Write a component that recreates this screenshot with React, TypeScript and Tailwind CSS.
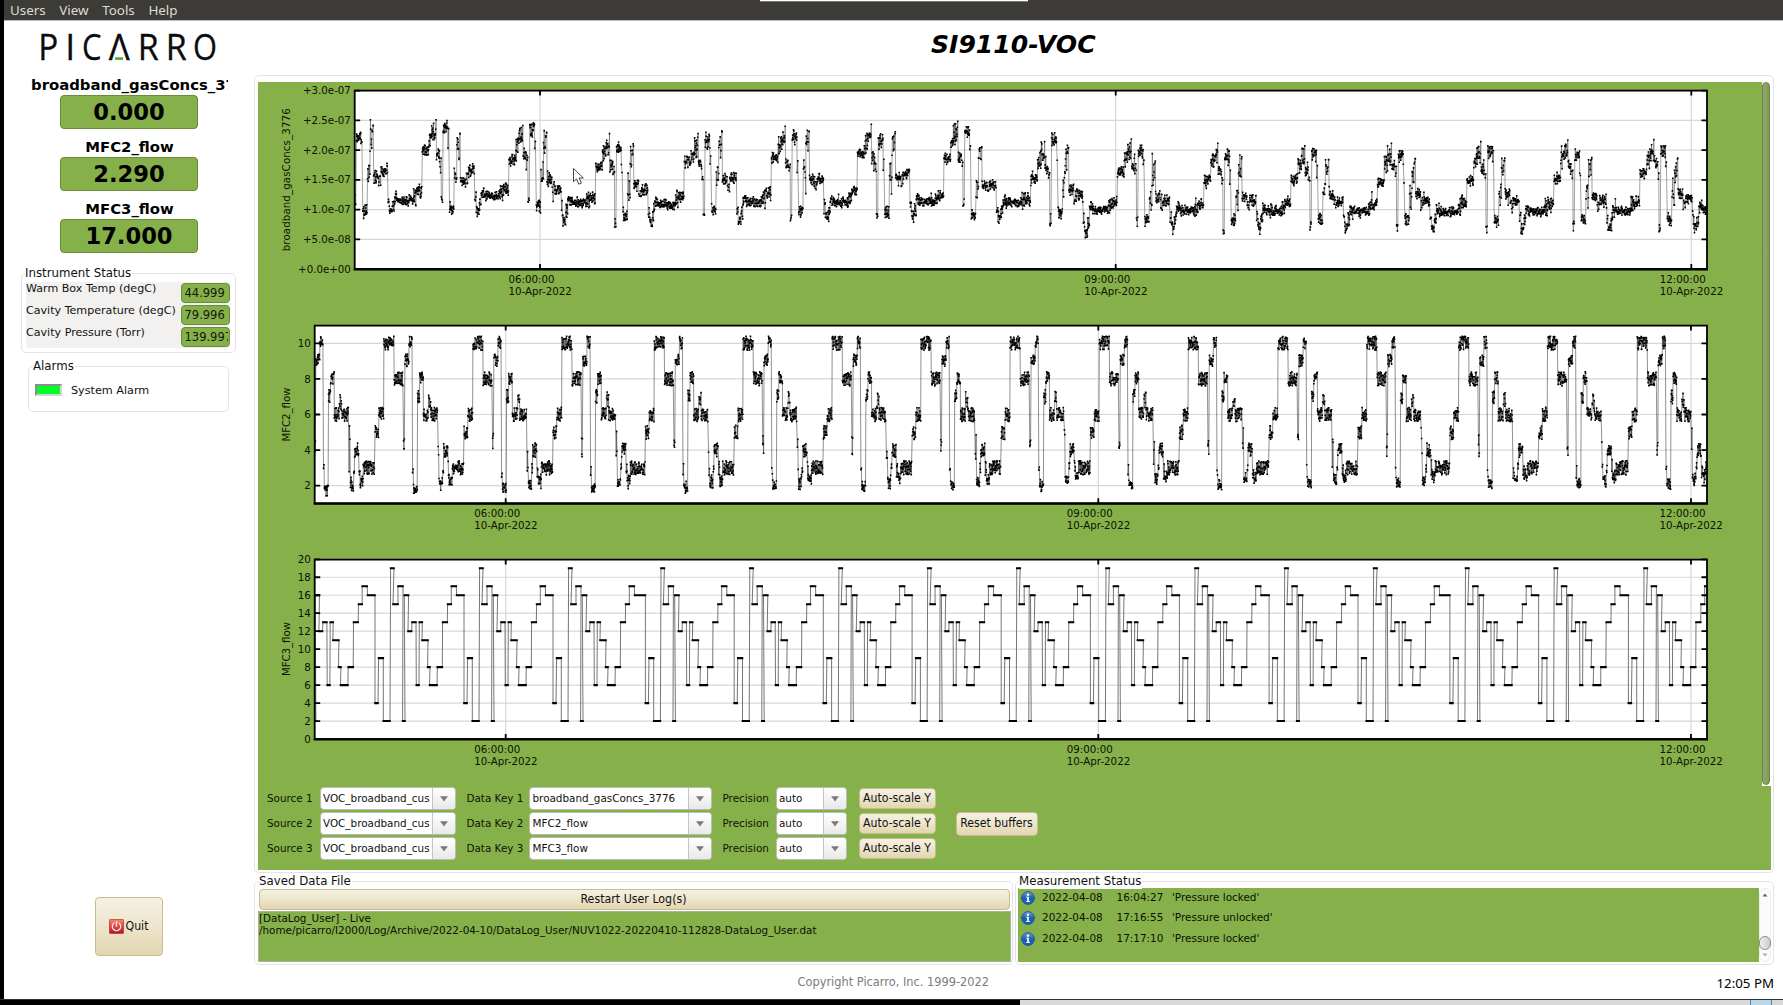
import React from "react";

const FONT = "'DejaVu Sans', sans-serif";

function makeRandom(seed: number) {
  let s = seed;
  return () => {
    s = (s * 1664525 + 1013904223) % 4294967296;
    return s / 4294967296;
  };
}

type Pt = [number, number];
type Seg = [number, number, number, number, number?];

/* ---------- series 1: gas concentration (units of 1e-7) ---------- */

const GAS_CYCLES: number[][] = [
  [335.5, 2.0, 2.3, 1.85, 1.1, 2.22, 0.97, 2.2, 1.55, 1.62, 0.95, 1.15, 1.3],
  [422.3, 2.0, 2.3, 1.92, 1.15, 2.4, 1.03, 2.08, 1.47, 1.64, 0.95, 1.23, 1.35],
  [509, 1.83, 2.2, 1.9, 1.1, 2.35, 1.05, 2.1, 1.52, 1.33, 0.77, 1.12, 1.22],
  [595.7, 1.73, 2.05, 1.75, 0.78, 2.02, 0.92, 1.9, 1.42, 1.33, 0.76, 1.08, 1.22],
  [684.3, 1.8, 2.05, 1.75, 0.82, 2.14, 1.0, 2.1, 1.5, 1.53, 0.8, 1.12, 1.3],
  [771.4, 1.88, 2.18, 1.8, 0.86, 2.2, 0.98, 2.12, 1.5, 1.5, 0.87, 1.12, 1.33],
  [857.5, 1.95, 2.22, 1.85, 0.9, 2.15, 0.95, 2.08, 1.55, 1.6, 0.9, 1.13, 1.22],
  [944, 1.85, 2.25, 1.88, 1.08, 2.32, 0.93, 1.85, 1.4, 1.42, 0.83, 1.12, 1.16],
  [1030.8, 1.53, 1.92, 1.72, 0.82, 2.16, 0.95, 1.85, 1.32, 1.25, 0.6, 1.0, 1.12],
  [1117.5, 1.62, 1.96, 1.76, 0.76, 1.98, 0.82, 1.62, 1.22, 1.14, 0.7, 0.98, 1.08],
  [1204, 1.5, 1.9, 1.65, 0.65, 1.88, 0.82, 1.65, 1.22, 1.15, 0.68, 0.98, 1.1],
  [1291, 1.5, 1.85, 1.68, 0.7, 1.93, 0.82, 1.65, 1.25, 1.14, 0.68, 0.97, 1.1],
  [1377.6, 1.45, 1.9, 1.74, 0.72, 1.96, 0.83, 1.65, 1.25, 1.14, 0.68, 0.97, 1.1],
  [1467, 1.48, 1.92, 1.7, 0.7, 1.97, 0.83, 1.65, 1.25, 1.14, 0.65, 0.97, 1.1],
  [1554, 1.53, 1.95, 1.72, 0.7, 1.9, 0.83, 1.65, 1.25, 1.15, 0.68, 0.98, 1.12],
  [1640, 1.6, 1.96, 1.78, 0.74, 1.97, 0.83, 1.65, 1.27, 1.16, 0.68, 1.0, 1.1],
];

function gasSeries(): Pt[] {
  const rnd = makeRandom(77);
  const out: Pt[] = [];
  GAS_CYCLES.forEach(([x0, a, b, c, l1, d, l2, e, f1, f2, l3, g, h], i) => {
    const next = GAS_CYCLES[i + 1]?.[0] ?? x0 + 86.7;
    const len = next - x0;
    const segs: Seg[] = [
      [0, 6.5, a, 0.11],
      [6.8, 10, b - 0.1, 0.19],
      [10, 13.6, b, 0.2],
      [13.8, 13.9, b + 0.22, 0.02],
      [14.2, 17.3, c, 0.14],
      [17.3, 18.8, c - 0.12, 0.16, 0.5],
      [19, 20.3, l1, 0.14, 0.4],
      [20.8, 25.5, d, 0.14],
      [25.7, 27, d - 0.25, 0.35, 0.7],
      [27.3, 31.5, l2, 0.13],
      [32, 34.5, (l2 + e) / 2, 0.35, 0.4],
      [34.5, 37.3, e, 0.26, 0.35],
      [37.5, 37.8, e + 0.2, 0.04],
      [38.1, 43, f1, 0.12],
      [43.2, 45.5, (f1 + f2) / 2 - 0.12, 0.2, 0.5],
      [45.5, 52.2, f2, 0.12],
      [52.6, 54, l3 + 0.2, 0.17, 0.4],
      [54, 56.8, l3 + 0.02, 0.1],
      [56.8, 58.8, (l3 + g) / 2, 0.16],
      [58.8, 62, g + 0.04, 0.13],
      [62, len - 9, g, 0.1],
      [len - 9, len - 6, (g + h) / 2, 0.2],
      [len - 6, len - 0.3, h, 0.13],
    ];
    for (const [s, t, v, n, step] of segs) {
      for (let x = s; x <= t; x += step ?? 0.26) {
        const k = rnd() + rnd() - 1;
        const spike = rnd() > 0.94 ? 1.6 : 1;
        out.push([x0 + x, v + k * n * spike]);
      }
    }
  });
  return out;
}

/* ---------- series 2: MFC2 flow ---------- */

const CYCLE_STARTS = [
  301.2, 390.3, 479.3, 568.3, 660.7, 749.5, 838.6, 927.4, 1016.5, 1105.7, 1194.7, 1284.4, 1373.3,
  1465.2, 1553.9, 1643.7,
];

const FLOW2: Seg[] = [
  [0, 30, 9.6, 10.4],
  [31, 57, 7.6, 8.4],
  [59, 62, 3.6, 5, 0.8],
  [63, 75, 8.7, 9.4],
  [75.5, 85, 9.7, 10.4],
  [86, 88, 2.4, 3.3, 1.5],
  [88.7, 100, 1.4, 2.2],
  [101, 107, 6.6, 7.4],
  [107.5, 118, 7.7, 8.4],
  [118.4, 133, 5.6, 6.4],
  [134, 140, 6.3, 7.3, 1],
  [140.5, 161, 5.6, 6.4],
  [163, 166, 2.4, 5.4, 1.1],
  [166.7, 176, 1.6, 2.5],
  [177, 179, 2.7, 3.3, 0.8],
  [179.5, 192, 3.6, 4.4],
  [193, 196, 2.3, 3.5, 0.9],
  [196, 205, 1.7, 2.7],
  [205.5, 239, 2.6, 3.4],
  [240.5, 251, 4.6, 5.4],
  [252, 266.3, 5.6, 6.4],
];

function flow2Series(): Pt[] {
  const rnd = makeRandom(4242);
  const out: Pt[] = [];
  CYCLE_STARTS.forEach((c, i) => {
    const x0 = c - 6.4;
    const shift = ((CYCLE_STARTS[i + 1] ?? c + 89) - c - 89) * 3;
    const lift = Math.min(i, 10) * 0.03;
    FLOW2.forEach(([s, t, lo, hi, step], j) => {
      const dx = j > 18 ? shift : 0;
      const ext = j >= 18 ? shift : 0;
      for (let x = s + dx; x <= t + ext; x += step ?? 0.74) {
        const up = lo < 2.3 ? lift : 0;
        let v = lo + up + (hi - lo) * rnd();
        if (hi < 2.8) v = lo + up + (hi - lo) * 0.5 * (rnd() + rnd());
        out.push([x0 + x / 3, v]);
      }
    });
  });
  return out;
}

/* ---------- series 3: MFC3 flow ---------- */

const FLOW3: [number, number, number][] = [
  [1, 11, 19],
  [8, 23, 15],
  [23, 38, 17],
  [37, 44, 2],
  [42, 55, 16],
  [53, 64, 12],
  [65, 77, 13],
  [78, 86, 6],
  [87, 96, 13],
  [95, 113, 11],
  [112, 119, 8],
  [118, 140, 6],
  [141, 156, 8],
  [157, 171, 13],
  [172, 183, 15],
  [183, 198, 17],
  [199, 221, 16],
  [221, 230, 4],
  [232, 246, 9],
  [246, 266, 2],
];

function flow3Flats(): [number, number, number][] {
  const out: [number, number, number][] = [];
  CYCLE_STARTS.forEach((c, i) => {
    const shift = (CYCLE_STARTS[i + 1] ?? c + 89) - c - 89;
    FLOW3.forEach(([a, b, v], j) => {
      const dx = j > 16 ? shift : 0;
      const ext = j >= 16 ? shift : 0;
      out.push([c + a / 3 + dx, c + b / 3 + ext, v]);
    });
  });
  return out;
}

const linePath = (pts: Pt[]) =>
  pts.map(([x, y], i) => `${i ? "L" : "M"}${x.toFixed(1)} ${y.toFixed(1)}`).join("");
const dotPath = (pts: Pt[]) =>
  pts.map(([x, y]) => `M${(x - 0.8).toFixed(1)} ${y.toFixed(1)}h1.6`).join("");

interface Tick {
  pos: number;
  label: string;
}

interface ChartProps {
  top: number;
  height: number;
  frame: [number, number, number, number];
  title: string;
  titleLen: number;
  titleY: number;
  yTicks: Tick[];
  xTicks: [number, string][];
  children: React.ReactNode;
  id: string;
}

function Chart(p: ChartProps) {
  const [l, t, r, b] = p.frame;
  return (
    <svg
      width={1500}
      height={p.height}
      viewBox={`258 ${p.top} 1500 ${p.height}`}
      className="block shrink-0"
      fontFamily={FONT}
      fontSize={10.25}
      fill="#0c1204"
    >
      <defs>
        <clipPath id={p.id}>
          <rect x={l} y={t} width={r - l} height={b - t} />
        </clipPath>
      </defs>
      <rect x={l} y={t} width={r - l} height={b - t} fill="#fff" />
      <g stroke="#d7d7d7" strokeWidth={1.2}>
        {p.yTicks.map((k) => (
          <line key={k.pos} x1={l} x2={r} y1={k.pos} y2={k.pos} />
        ))}
        {p.xTicks.map(([x]) => (
          <line key={x} x1={x} x2={x} y1={t} y2={b} />
        ))}
      </g>
      <g clipPath={`url(#${p.id})`}>{p.children}</g>
      <g stroke="#000" strokeWidth={1.8}>
        {p.yTicks.map((k) => (
          <path key={k.pos} d={`M${l} ${k.pos}h5.5M${r} ${k.pos}h-5.5`} />
        ))}
        {p.xTicks.map(([x]) => (
          <path key={x} d={`M${x} ${t}v5M${x} ${b}v-5`} />
        ))}
      </g>
      <rect x={l} y={t} width={r - l} height={b - t} fill="none" stroke="#000" strokeWidth={1.8} />
      <line x1={l - 1} x2={r + 1} y1={b + 0.3} y2={b + 0.3} stroke="#000" strokeWidth={2.3} />
      {p.yTicks.map((k) => (
        <text key={k.pos} x={l - 3.8} y={k.pos + 3.6} textAnchor="end">
          {k.label}
        </text>
      ))}
      {p.xTicks.map(([x, label]) => (
        <g key={x}>
          <text x={x - 31.5} y={b + 14}>
            {label}
          </text>
          <text x={x - 31.5} y={b + 26}>
            10-Apr-2022
          </text>
        </g>
      ))}
      <text
        transform={`translate(289.5 ${p.titleY}) rotate(-90)`}
        textAnchor="middle"
        textLength={p.titleLen}
      >
        {p.title}
      </text>
    </svg>
  );
}

const gasY = (v: number) => 269 - v * 59.45;
const f2Y = (v: number) => 521.3 - v * 17.8;
const f3Y = (v: number) => 739 - v * 8.985;

const gasPts: Pt[] = gasSeries().map(([x, v]) => [x, gasY(Math.min(v, 2.51))]);
const f2Pts: Pt[] = flow2Series().map(([x, v]) => [x, f2Y(v)]);
const f3Flats = flow3Flats();
const f3Line = f3Flats
  .map(([a, b, v], i) => `${i ? "L" : "M"}${a.toFixed(1)} ${f3Y(v).toFixed(1)}H${b.toFixed(1)}`)
  .join("");
const f3Bars = f3Flats
  .map(([a, b, v]) => `M${(a - 0.8).toFixed(1)} ${f3Y(v).toFixed(1)}H${(b + 0.8).toFixed(1)}`)
  .join("");

const gasTicks: Tick[] = [
  "+0.0e+00",
  "+5.0e-08",
  "+1.0e-07",
  "+1.5e-07",
  "+2.0e-07",
  "+2.5e-07",
  "+3.0e-07",
].map((label, i) => ({ pos: gasY(i * 0.5), label }));
const f2Ticks: Tick[] = [2, 4, 6, 8, 10].map((n) => ({ pos: f2Y(n), label: String(n) }));
const f3Ticks: Tick[] = [0, 2, 4, 6, 8, 10, 12, 14, 16, 18, 20].map((n) => ({
  pos: f3Y(n),
  label: String(n),
}));

/* ---------- widgets ---------- */

function Combo({ text, className, arrow }: { text: string; className: string; arrow: string }) {
  return (
    <div
      className={`flex h-[23px] overflow-hidden rounded-[4px] border border-[#b9bfae] bg-white ${className}`}
    >
      <div className="mr-[2px] ml-[2.5px] flex-1 overflow-hidden text-[10.4px] leading-[20px] whitespace-nowrap text-[#111]">
        {text}
      </div>
      <div
        className={`flex items-center justify-center border-l border-[#c4c4c4] bg-linear-to-b from-white to-[#e9e9e9] ${arrow}`}
      >
        <svg width="8" height="6" viewBox="0 0 8 6">
          <path d="M0.5 0.8h7L4 5.6z" fill="#7c7c7c" />
          <path d="M0.5 0.8h7" stroke="#666" strokeWidth="0.8" />
        </svg>
      </div>
    </div>
  );
}

function BeigeButton({ children, className }: { children: React.ReactNode; className: string }) {
  return (
    <button
      className={`flex items-center justify-center rounded-[4px] border border-[#c9bb8c] bg-linear-to-b from-[#f5f0e1] via-[#ede5cc] to-[#e2d6b0] whitespace-nowrap text-[#111] ${className}`}
    >
      {children}
    </button>
  );
}

function SourceRow({ n, dataKey }: { n: number; dataKey: string }) {
  return (
    <div className="flex h-[25px] items-center text-[10.4px] text-[#0d1505]">
      <span className="w-[52.5px] whitespace-nowrap">Source {n}</span>
      <Combo text="VOC_broadband_cus" className="w-[136.5px]" arrow="w-[23px]" />
      <span className="ml-[10.5px] w-[62.5px] whitespace-nowrap">Data Key {n}</span>
      <Combo text={dataKey} className="w-[183px]" arrow="w-[23px]" />
      <span className="ml-[10.5px] w-[53px]">Precision</span>
      <Combo text="auto" className="w-[71.5px]" arrow="w-[23px]" />
      <BeigeButton className="ml-3 h-[21px] w-[77px] pr-px pb-px font-['DejaVu_Sans_Condensed','DejaVu_Sans',sans-serif] text-[12.2px] [font-stretch:condensed]">
        Auto-scale Y
      </BeigeButton>
    </div>
  );
}

function Readout({ label, value }: { label: string; value: string }) {
  return (
    <div className="flex h-[62px] flex-col items-center">
      <div className="-mx-px flex h-[19px] w-[198px] overflow-hidden pl-px">
        <span className="mx-auto text-[14.85px] leading-[18px] font-bold whitespace-nowrap">{label}</span>
      </div>
      <div className="flex h-[34px] w-[138px] items-center justify-center rounded-[4px] border border-[#6a8c3a] bg-[#86b04a] pb-px text-[22.6px] leading-[30px] font-bold">
        {value}
      </div>
    </div>
  );
}

function GroupBox({
  title,
  className,
  legend,
  children,
}: {
  title?: string;
  className: string;
  legend?: string;
  children: React.ReactNode;
}) {
  return (
    <section className={`relative rounded-[5px] border border-[#e4e4e4] ${className}`}>
      {title && (
        <span
          className={`absolute -top-[9px] bg-white pr-px text-[11.8px] leading-[16px] whitespace-nowrap text-[#111] ${legend}`}
        >
          {title}
        </span>
      )}
      {children}
    </section>
  );
}

function StatusValue({ label, value }: { label: string; value: string }) {
  return (
    <div className="flex h-[22.2px] items-start justify-between">
      <span className="text-[11.1px] leading-[13px] whitespace-nowrap text-[#111]">{label}</span>
      <span className="mt-[0.5px] mr-[0.5px] h-[20.5px] w-[49px] rounded-[4px] border border-[#6a8c3a] bg-[#86b04a] pr-px pl-[3px] text-[11.5px] leading-[18px] text-[#10180a]">
        <span className="block overflow-hidden">{value}</span>
      </span>
    </div>
  );
}

function InfoIcon() {
  return (
    <svg width="14" height="14" viewBox="0 0 14 14">
      <defs>
        <linearGradient id="info" x1="0" y1="0" x2="0" y2="1">
          <stop offset="0" stopColor="#6d9fd8" />
          <stop offset="0.5" stopColor="#1f5fae" />
          <stop offset="1" stopColor="#1463c4" />
        </linearGradient>
      </defs>
      <circle cx="7" cy="7" r="6.4" fill="url(#info)" stroke="#174a8a" strokeWidth="0.8" />
      <circle cx="7" cy="3.7" r="1.2" fill="#fff" />
      <path d="M5.2 5.7h2.7v4.2h1v1.1H5.2V9.9h1V6.8h-1z" fill="#fff" />
    </svg>
  );
}

const LOGO: [string, number, number][] = [
  ["P", 38.2, 20],
  ["I", 65.2, 10],
  ["C", 82, 19.5],
  ["Λ", 108.8, 21],
  ["R", 137.8, 21],
  ["R", 165.8, 21],
  ["O", 193, 24],
];

function Logo() {
  return (
    <svg width="190" height="52" viewBox="36 20 190 52" className="-my-[9px] block" role="img" aria-label="PICARRO">
      <g fontFamily="'Open Sans', sans-serif" fontSize="36" fill="#0c0c0c" stroke="#0c0c0c" strokeWidth="0.3">
        {LOGO.map(([ch, x, w], i) => (
          <text key={i} x={x} y={60.3} textLength={w} lengthAdjust="spacingAndGlyphs">
            {ch}
          </text>
        ))}
      </g>
      <rect x="115" y="57.2" width="8" height="2.8" fill="#5fa843" />
    </svg>
  );
}

const EVENTS: [string, string][] = [
  ["16:04:27", "'Pressure locked'"],
  ["17:16:55", "'Pressure unlocked'"],
  ["17:17:10", "'Pressure locked'"],
];

export default function App() {
  return (
    <div className="flex h-[1005px] w-[1783px] flex-col overflow-hidden bg-black font-['DejaVu_Sans',sans-serif] text-black">
      <header className="relative flex h-[20px] shrink-0 items-center gap-[13.6px] bg-[#3c3b37] pt-px pl-[10px] font-['Noto_Sans',sans-serif] text-[13.4px] leading-none text-[#dfdbd2]">
        <span>Users</span>
        <span>View</span>
        <span>Tools</span>
        <span>Help</span>
        <div className="absolute top-0 left-[760px] h-[2px] w-[268px] border-b border-[#777] bg-white" />
        <div className="absolute top-0 left-0 h-full w-1 bg-black" />
      </header>

      <div className="ml-1 flex h-[979px] shrink-0 border-t border-[#bdbdbd] bg-white">
        <aside className="flex w-[250px] shrink-0 flex-col">
          <div className="mt-[8px] ml-8">
            <Logo />
          </div>
          <div className="mt-[13px] ml-[27px] flex w-[196px] flex-col">
            <Readout label="broadband_gasConcs_3776" value="0.000" />
            <Readout label="MFC2_flow" value="2.290" />
            <Readout label="MFC3_flow" value="17.000" />
          </div>

          <GroupBox title="Instrument Status" legend="left-[3px]" className="mt-[11px] ml-[17px] h-[80px] w-[215px]">
            <div className="mt-2 ml-1 h-[66px] w-[204px] bg-[#f2f1f0]">
              <StatusValue label="Warm Box Temp (degC)" value="44.999" />
              <StatusValue label="Cavity Temperature (degC)" value="79.996" />
              <StatusValue label="Cavity Pressure (Torr)" value="139.997" />
            </div>
          </GroupBox>

          <GroupBox title="Alarms" legend="left-[4px]" className="mt-[13px] ml-6 h-[46px] w-[201px]">
            <div className="mt-[16.5px] ml-[6px] flex items-center">
              <span className="h-[12px] w-[27px] border-2 border-[#8d8d8d] border-r-[#d5d5d5] border-b-[#d5d5d5] bg-[#00ff2a]" />
              <span className="ml-[9px] text-[11.2px] leading-[13px] text-[#111]">System Alarm</span>
            </div>
          </GroupBox>

          <BeigeButton className="mt-auto mb-[43px] ml-[91px] h-[59px] w-[68px] gap-[2px] pr-px pb-px font-['DejaVu_Sans_Condensed','DejaVu_Sans',sans-serif] text-[12.2px] [font-stretch:condensed]">
            <svg width="15" height="15" viewBox="0 0 15 15">
              <defs>
                <linearGradient id="quit" x1="0" y1="0" x2="0" y2="1">
                  <stop offset="0" stopColor="#f08a6c" />
                  <stop offset="0.6" stopColor="#d93a40" />
                  <stop offset="1" stopColor="#a8143a" />
                </linearGradient>
              </defs>
              <rect x="0.4" y="0.4" width="14.2" height="14.2" rx="1" fill="url(#quit)" stroke="#b5382f" strokeWidth="0.8" />
              <path d="M5 4.1a4.2 4.2 0 1 0 5 0" fill="none" stroke="#fbe4e0" strokeWidth="1.3" strokeLinecap="round" />
              <path d="M7.5 2.6v4.6" stroke="#fbe4e0" strokeWidth="1.4" strokeLinecap="round" />
            </svg>
            Quit
          </BeigeButton>
        </aside>

        <main className="flex w-[1520px] shrink-0 flex-col">
          <h1 className="mt-[7px] h-[47px] pl-[677px] text-[25.1px] leading-[34px] font-bold whitespace-nowrap italic">
            SI9110-VOC
          </h1>

          <GroupBox className="h-[798px] shrink-0 p-[3px] pt-[6px]">
            <div className="relative flex h-[788px] w-[1513px] flex-col bg-[#86b04a]">
              <Chart
                id="c1"
                top={82}
                height={228}
                frame={[354.7, 90.6, 1707, 269]}
                title="broadband_gasConcs_3776"
                titleLen={143}
                titleY={179.8}
                yTicks={gasTicks}
                xTicks={[
                  [540, "06:00:00"],
                  [1115.7, "09:00:00"],
                  [1691.3, "12:00:00"],
                ]}
              >
                <path d={linePath(gasPts)} fill="none" stroke="#444" strokeWidth={0.5} />
                <path d={dotPath(gasPts)} stroke="#000" strokeWidth={1.6} />
              </Chart>
              <Chart
                id="c2"
                top={310}
                height={230}
                frame={[314.7, 325.6, 1707, 503.3]}
                title="MFC2_flow"
                titleLen={54}
                titleY={414.5}
                yTicks={f2Ticks}
                xTicks={[
                  [505.7, "06:00:00"],
                  [1098.3, "09:00:00"],
                  [1691, "12:00:00"],
                ]}
              >
                <path d={linePath(f2Pts)} fill="none" stroke="#333" strokeWidth={0.55} />
                <path d={dotPath(f2Pts)} stroke="#000" strokeWidth={1.6} />
              </Chart>
              <Chart
                id="c3"
                top={540}
                height={236}
                frame={[314.7, 559.6, 1707, 739]}
                title="MFC3_flow"
                titleLen={54}
                titleY={649}
                yTicks={f3Ticks}
                xTicks={[
                  [505.7, "06:00:00"],
                  [1098.3, "09:00:00"],
                  [1691, "12:00:00"],
                ]}
              >
                <path d={f3Line} fill="none" stroke="#666" strokeWidth={0.9} />
                <path d={f3Bars} stroke="#000" strokeWidth={2.1} />
              </Chart>

              <div className="mt-[10px] ml-[9px] flex items-center">
                <div className="flex flex-col">
                  <SourceRow n={1} dataKey="broadband_gasConcs_3776" />
                  <SourceRow n={2} dataKey="MFC2_flow" />
                  <SourceRow n={3} dataKey="MFC3_flow" />
                </div>
                <BeigeButton className="ml-[20px] h-[24px] w-[82px] pr-px pb-px font-['DejaVu_Sans_Condensed','DejaVu_Sans',sans-serif] text-[12.2px] [font-stretch:condensed]">
                  Reset buffers
                </BeigeButton>
              </div>

              <div className="absolute top-0 right-0 h-[704px] w-[9px] bg-white">
                <div className="h-[703px] w-2 rounded-[4px] border border-[#6f8250] bg-linear-to-r from-[#9a9a86] via-[#86a858] to-[#7b9c49]" />
              </div>
              <svg className="absolute top-[85px] left-[314px]" width="14" height="20" viewBox="0 0 14 20">
                <path
                  d="M1.5 1.5v13.2l3-2.8 2.3 5.3 2.6-1.1-2.3-5.1h4.3z"
                  fill="#fff"
                  stroke="#333"
                  strokeWidth="0.9"
                />
              </svg>
            </div>
          </GroupBox>

          <div className="mt-[8px] flex gap-[2px]">
            <GroupBox title="Saved Data File" legend="left-[4px]" className="h-[84px] w-[759px] px-[3px] pt-[7px]">
              <BeigeButton className="ml-px h-[21px] w-[751px] pr-0.5 pb-px font-['DejaVu_Sans_Condensed','DejaVu_Sans',sans-serif] text-[12.3px] [font-stretch:condensed]">
                Restart User Log(s)
              </BeigeButton>
              <div className="mt-px h-[51px] w-[753px] border border-[#a9b59a] bg-[#86b04a] text-[10.4px] leading-[12px] whitespace-nowrap text-[#0b1104]">
                <div>[DataLog_User] - Live</div>
                <div>/home/picarro/I2000/Log/Archive/2022-04-10/DataLog_User/NUV1022-20220410-112828-DataLog_User.dat</div>
              </div>
            </GroupBox>
            <GroupBox title="Measurement Status" legend="left-[3px]" className="h-[84px] w-[759px] px-[2px] pt-[6px]">
              <div className="flex h-[74px]">
                <div className="flex w-[741px] flex-col bg-[#86b04a] text-[10.45px] text-[#0b1104]">
                  {EVENTS.map(([time, msg]) => (
                    <div key={time} className="flex h-[20.5px] items-center pb-px pl-[2.5px] whitespace-nowrap">
                      <InfoIcon />
                      <span className="ml-[7.5px] w-[74.5px]">2022-04-08</span>
                      <span className="w-[55.5px]">{time}</span>
                      <span>{msg}</span>
                    </div>
                  ))}
                </div>
                <div className="flex w-[12px] flex-col items-center justify-between rounded-[6px] border border-[#ececec] bg-[#fbfbfb] py-1">
                  <svg width="6" height="4" viewBox="0 0 6 4">
                    <path d="M0.5 3.5h5L3 0.5z" fill="#666" />
                  </svg>
                  <div className="mt-auto mb-[3px] h-[14px] w-[12px] rounded-full border border-[#8c8c8c] bg-linear-to-r from-[#f0efee] to-[#cfcdcb]" />
                  <svg width="6" height="4" viewBox="0 0 6 4">
                    <path d="M0.5 0.5h5L3 3.5z" fill="#aaa" />
                  </svg>
                </div>
              </div>
            </GroupBox>
          </div>

          <footer className="flex h-[34px] items-center justify-between pt-[2px]">
            <span className="pl-[543.5px] text-[11.4px] text-[#7c7c7c]">Copyright Picarro, Inc. 1999-2022</span>
            <span className="pt-0.5 font-['Noto_Sans',sans-serif] text-[13.3px] text-black">12:05 PM</span>
          </footer>
        </main>
      </div>

      <div className="flex h-[6px] shrink-0 border-t border-[#333]">
        <div className="w-[1020px] bg-black" />
        <div className="flex-1 bg-[#d9d9d9]" />
        <div className="w-[22px] border-x border-[#3a8fc0] bg-[#b9d8ea]" />
        <div className="w-[11px] bg-[#d9d9d9]" />
      </div>
    </div>
  );
}
